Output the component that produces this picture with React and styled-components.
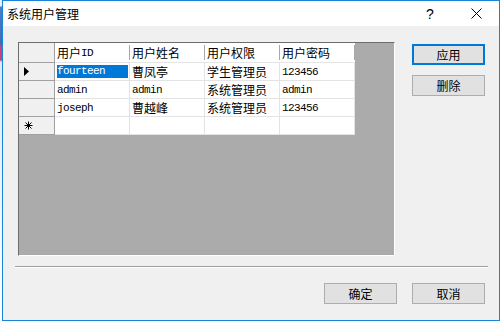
import styled, { createGlobalStyle } from "styled-components";

const GlobalStyle = createGlobalStyle`
  html, body { margin: 0; padding: 0; background: #ffffff; }
  body { font-family: "Noto Sans CJK SC", "Liberation Sans", sans-serif; }
`;

const columns = ["用户ID", "用户姓名", "用户权限", "用户密码"];

const users = [
  ["fourteen", "曹凤亭", "学生管理员", "123456"],
  ["admin", "admin", "系统管理员", "admin"],
  ["joseph", "曹越峰", "系统管理员", "123456"],
];

const isLatin = (s) => /^[\x00-\x7f]+$/.test(s);

const App = () => {
  return (
    <>
      <GlobalStyle />
      <Desktop>
        <Wallpaper />
        <Window>
          <TitleBar>
            <Title>系统用户管理</Title>
            <CaptionButton>
              <Help>?</Help>
            </CaptionButton>
            <CaptionButton>
              <svg width="11" height="11" viewBox="0 0 11 11">
                <path d="M0.5 0.5 L10.5 10.5 M10.5 0.5 L0.5 10.5" stroke="#000" strokeWidth="1" fill="none" />
              </svg>
            </CaptionButton>
          </TitleBar>
          <Body>
            <TopRow>
              <GridView>
                <Table>
                  <Corner />
                  {columns.map((c) => (
                    <ColHeader key={c}>
                      {c.replace("ID", "")}
                      {c.includes("ID") && <Latin>ID</Latin>}
                    </ColHeader>
                  ))}
                  {users.map((row, i) => (
                    <Row key={row[0]}>
                      <RowHeader>
                        {i === 0 && (
                          <svg width="5" height="9" viewBox="0 0 5 9">
                            <polygon points="0,0 5,4.5 0,9" fill="#000" />
                          </svg>
                        )}
                      </RowHeader>
                      {row.map((v, j) =>
                        i === 0 && j === 0 ? (
                          <Cell key={j}>
                            <Editor>
                              <Latin>{v}</Latin>
                            </Editor>
                          </Cell>
                        ) : (
                          <Cell key={j}>{isLatin(v) ? <Latin>{v}</Latin> : v}</Cell>
                        )
                      )}
                    </Row>
                  ))}
                  <Row>
                    <RowHeader>
                      <svg width="9" height="9" viewBox="0 0 9 9">
                        <path d="M4.5 0.5 V8.5 M0.5 4.5 H8.5 M1.5 1.5 L7.5 7.5 M7.5 1.5 L1.5 7.5" stroke="#000" strokeWidth="1" fill="none" />
                      </svg>
                    </RowHeader>
                    {columns.map((c) => (
                      <Cell key={c} />
                    ))}
                  </Row>
                </Table>
              </GridView>
              <SideButtons>
                <Button $primary>应用</Button>
                <Button>删除</Button>
              </SideButtons>
            </TopRow>
            <Separator />
            <Footer>
              <Button>确定</Button>
              <Button>取消</Button>
            </Footer>
          </Body>
        </Window>
      </Desktop>
    </>
  );
};

const Desktop = styled.div`display: flex; width: 502px; height: 323px; overflow: hidden;`;
const Wallpaper = styled.div`width: 2px; height: 323px; background: linear-gradient(to bottom, #e8eef6 0px, #e8eef6 6px, #4f7cc4 7px, #3d6bb5 44px, #c2457e 46px, #c2457e 60px, #dfe8f3 62px, #ffffff 100%);`;
const Window = styled.div`box-sizing: border-box; width: 498px; height: 321px; border: 1px solid #1883d7; display: flex; flex-direction: column; background: #f0f0f0;`;
const TitleBar = styled.div`height: 25px; background: #ffffff; display: flex; align-items: center; padding-left: 4px;`;
const Title = styled.div`flex: 1; font-size: 12px; line-height: 16px; color: #000;`;
const CaptionButton = styled.div`width: 46px; height: 25px; display: flex; align-items: center; justify-content: center;`;
const Help = styled.span`font-family: "Liberation Sans", sans-serif; font-size: 14px; line-height: 14px; color: #000;`;
const Body = styled.div`flex: 1; display: flex; flex-direction: column;`;
const TopRow = styled.div`display: flex; align-items: flex-start; margin-top: 16px; padding-left: 15px;`;
const GridView = styled.div`box-sizing: border-box; width: 377px; height: 214px; background: #ababab; border: 1px solid; border-color: #6d6d6d #ffffff #ffffff #6d6d6d; overflow: hidden;`;
const Table = styled.div`display: grid; grid-template-columns: 36px repeat(4, 75px); grid-auto-rows: 18px; grid-template-rows: 20px; width: 336px;`;
const Row = styled.div`display: contents;`;
const Corner = styled.div`box-sizing: border-box; background: #f0f0f0; border-right: 1px solid #a0a0a0; border-bottom: 1px solid #a0a0a0;`;
const ColHeader = styled.div`
  box-sizing: border-box; position: relative; background: #ffffff; border-bottom: 1px solid #e5e5e5;
  padding-left: 2px; display: flex; align-items: center; font-size: 12px; color: #000;
  &::after { content: ""; position: absolute; right: 0; top: 2px; bottom: 2px; width: 1px; background: #a8a8a8; }
`;
const RowHeader = styled.div`box-sizing: border-box; background: #f0f0f0; border-right: 1px solid #a0a0a0; border-bottom: 1px solid #a0a0a0; display: flex; align-items: center; padding-left: 5px;`;
const Cell = styled.div`box-sizing: border-box; background: #ffffff; border-right: 1px solid #e3e3e3; border-bottom: 1px solid #e3e3e3; display: flex; align-items: center; padding-left: 2px; font-size: 12px; color: #000; white-space: nowrap; overflow: hidden;`;
const Latin = styled.span`font-family: "Liberation Mono", monospace; font-size: 11px; letter-spacing: -0.6px;`;
const Editor = styled.div`flex: 1; margin-right: 1px; height: 13px; line-height: 13px; background: #0078d7; color: #ffffff; display: flex; align-items: center;`;
const SideButtons = styled.div`display: flex; flex-direction: column; gap: 10px; margin-left: 17px; margin-top: 2px;`;
const Button = styled.div`
  box-sizing: border-box; width: 73px; height: 21px; background: #e1e1e1;
  border: ${(p) => (p.$primary ? "2px solid #0078d7" : "1px solid #adadad")};
  display: flex; align-items: center; justify-content: center; font-size: 12px; color: #000;
`;
const Separator = styled.div`margin: 10px 11px 0 12px; border-top: 1px solid #a0a0a0; border-bottom: 1px solid #ffffff;`;
const Footer = styled.div`display: flex; justify-content: flex-end; gap: 15px; margin-top: 15px; padding-right: 14px;`;

export default App;
